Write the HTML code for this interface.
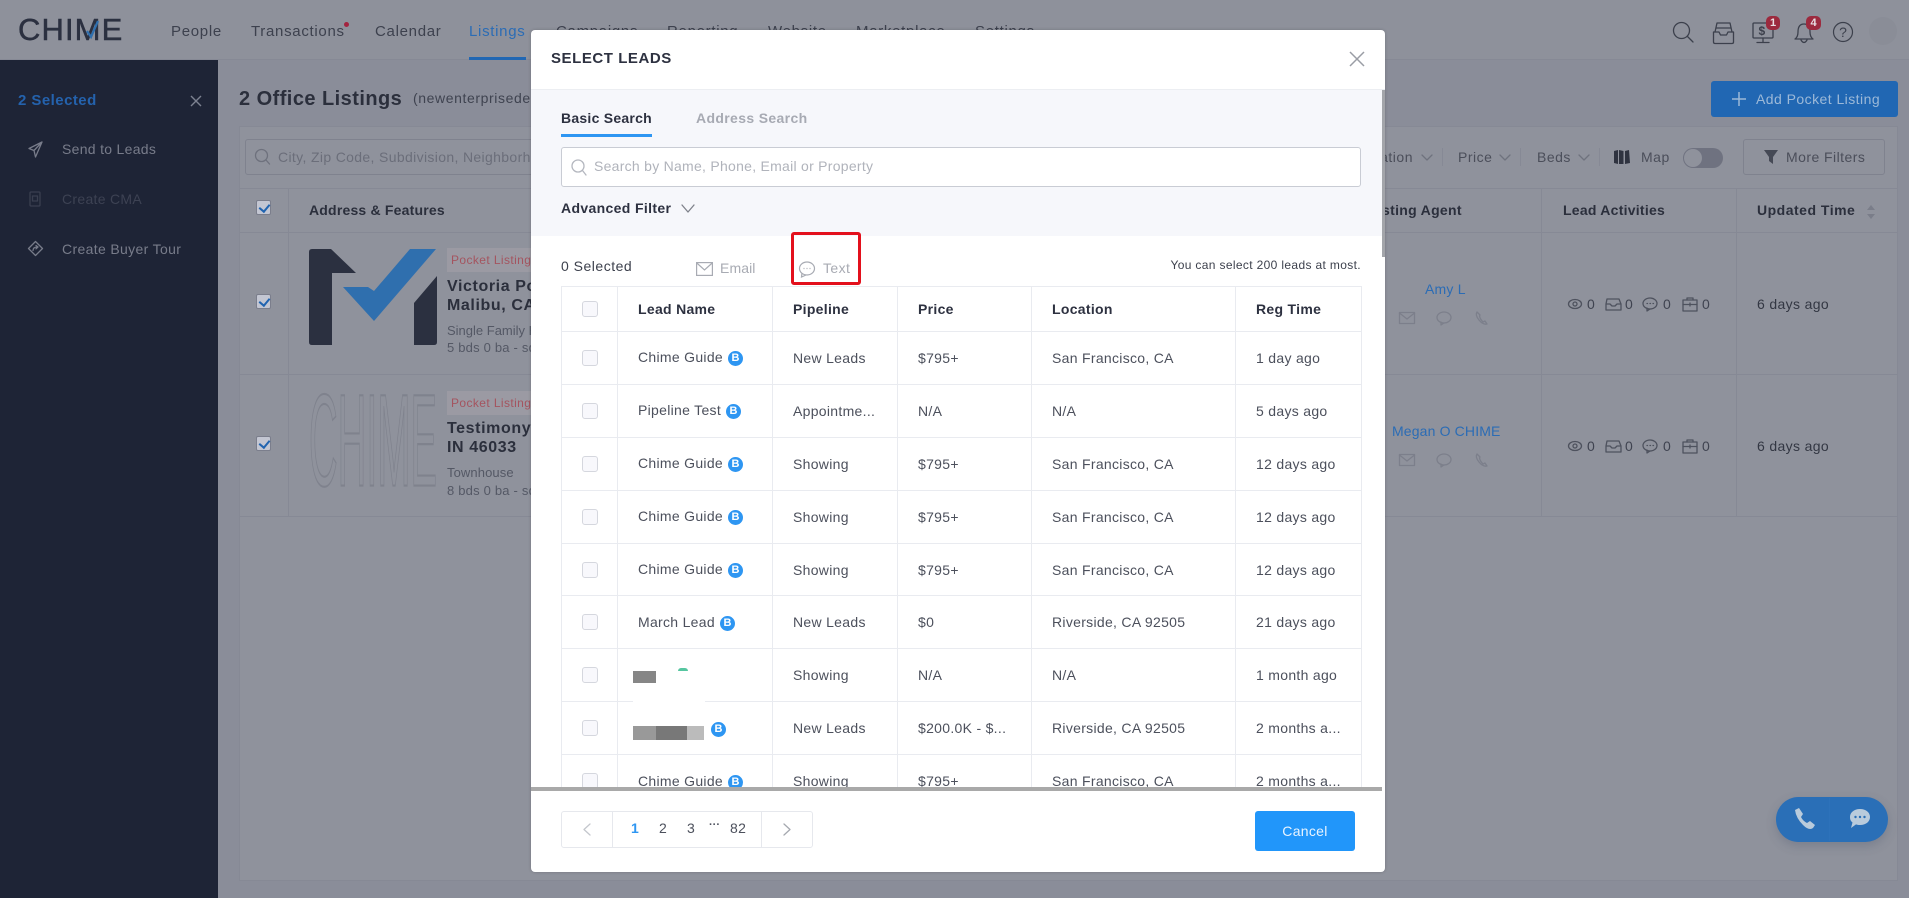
<!DOCTYPE html>
<html><head><meta charset="utf-8"><title>Select Leads</title>
<style>
*{box-sizing:border-box}
html,body{margin:0;padding:0;width:1909px;height:898px;overflow:hidden;background:#8a8d99;font-family:"Liberation Sans",sans-serif}
.a{position:absolute;white-space:nowrap}
.t{position:absolute;white-space:nowrap;line-height:20px;margin-top:-10px;letter-spacing:.3px}
svg{position:absolute;overflow:visible}
.s{fill:none;stroke-width:1.3;stroke-linecap:round;stroke-linejoin:round}
.nav{font-size:15px;color:#3d414e;letter-spacing:.7px}
.side{font-size:14px;color:#787c8a}
.th{font-size:14px;font-weight:bold;color:#2b2f3c}
.cb{position:absolute;width:15px;height:15px;background:#c3c6d2;border:1px solid #7b7e8c;border-radius:2px}
.cb:after{content:"";position:absolute;left:4px;top:1px;width:5px;height:8px;border:solid #2164b0;border-width:0 2.2px 2.2px 0;transform:rotate(40deg)}
.div{position:absolute;background:#868995}
.tag{position:absolute;left:447px;width:84px;height:24px;background:#9b9aa3;color:#a4545f;font-size:12px;line-height:24px;padding-left:4px;letter-spacing:.4px;white-space:nowrap;overflow:hidden}
.name{font-size:16px;font-weight:bold;color:#2b2f3c;letter-spacing:.6px}
.sub{font-size:13px;color:#545865;letter-spacing:.1px}
.modal{position:absolute;left:531px;top:30px;width:854px;height:842px;background:#fff;border-radius:4px;overflow:hidden;box-shadow:0 0 3px rgba(0,0,0,.2)}
.in{position:absolute;left:-531px;top:-30px;width:1909px;height:898px}
table{border-collapse:collapse;table-layout:fixed;width:800px;font-size:14px;color:#4c505c;letter-spacing:.3px}
td,th{border:1px solid #e9ebf0;padding:0 0 0 20px;text-align:left;white-space:nowrap;overflow:hidden;height:52.9px}
th{height:45px;color:#2d3140}
.box{display:block;width:16px;height:16px;border:1px solid #d5d7de;border-radius:3px;background:#f8f8fc;margin-left:0}
.b{display:inline-block;width:15px;height:15px;border-radius:50%;background:#2e96f2;color:#fff;font-size:11px;font-weight:bold;line-height:15px;text-align:center;letter-spacing:0;margin-left:5px;vertical-align:1px}
.pg{font-size:14px;color:#4c505c}
</style></head><body>

<!-- header -->
<div class="a" style="left:0;top:0;width:1909px;height:60px;background:#8e919b;border-bottom:1px solid #868995"></div>
<div class="a" style="left:18px;top:13px;font-size:31px;line-height:34px;color:#2b3040;letter-spacing:1.1px;font-weight:normal;-webkit-text-stroke:.5px #2b3040">CHIME</div>
<svg style="left:86px;top:19px" width="14" height="20"><path d="M1 12 L5 18 L12 2" fill="none" stroke="#2f6fae" stroke-width="2.2"/></svg>
<div class="t nav" style="left:171px;top:32px">People</div>
<div class="t nav" style="left:251px;top:32px">Transactions</div>
<div class="a" style="left:344px;top:22px;width:5px;height:5px;border-radius:50%;background:#a3233f"></div>
<div class="t nav" style="left:375px;top:32px">Calendar</div>
<div class="t nav" style="left:469px;top:32px;color:#2b6cb5">Listings</div>
<div class="a" style="left:469px;top:57px;width:57px;height:3px;background:#2167b3"></div>
<div class="t nav" style="left:556px;top:32px">Campaigns</div>
<div class="t nav" style="left:667px;top:32px">Reporting</div>
<div class="t nav" style="left:768px;top:32px">Website</div>
<div class="t nav" style="left:856px;top:32px">Marketplace</div>
<div class="t nav" style="left:975px;top:32px">Settings</div>

<!-- top icons -->
<svg style="left:1672px;top:21px" width="24" height="24"><g class="s" stroke="#3c404c" stroke-width="1.2"><circle cx="9.5" cy="9.5" r="8"/><path d="M15.5 15.5 L21 21"/></g></svg>
<svg style="left:1712px;top:21px" width="24" height="24"><g class="s" stroke="#3c404c" stroke-width="1.3"><path d="M1.5 11 H7 L8.5 14 H14.500 L16 11 H21.500 V21 Q21.500 22.500 20 22.500 H3 Q1.500 22.500 1.500 21 Z"/><path d="M3 11 L5 2 H18 L20 11 M4.500 7 H18.500"/></g></svg>
<svg style="left:1752px;top:21px" width="24" height="24"><g class="s" stroke="#3c404c" stroke-width="1.2"><rect x="1" y="2" width="20" height="15" rx="1"/><path d="M11 17 V21 M5 21.500 H17"/></g><text x="6.500" y="14" font-size="12" font-weight="bold" fill="#3c404c" font-family="Liberation Sans">$</text></svg>
<div class="a" style="left:1766px;top:16px;width:14px;height:14px;border-radius:5px;background:#9c2a3e;color:#e8dfe3;font-size:11px;font-weight:bold;line-height:14px;text-align:center">1</div>
<svg style="left:1793px;top:21px" width="22" height="24"><g class="s" stroke="#3c404c" stroke-width="1.2"><path d="M2 18 Q5 16 5 11 Q5 3 11 3 Q17 3 17 11 Q17 16 20 18 Z M8 19 Q11 24 14 19"/></g></svg>
<div class="a" style="left:1806px;top:16px;width:15px;height:14px;border-radius:5px;background:#9c2a3e;color:#e8dfe3;font-size:11px;font-weight:bold;line-height:14px;text-align:center">4</div>
<svg style="left:1833px;top:22px" width="20" height="20"><circle cx="10" cy="10" r="9.500" fill="none" stroke="#3c404c" stroke-width="1.200"/><text x="10" y="15" text-anchor="middle" font-size="14" fill="#3c404c" font-family="Liberation Sans">?</text></svg>
<div class="a" style="left:1869px;top:17px;width:28px;height:28px;border-radius:50%;background:#8a8d97"></div>

<!-- sidebar -->
<div class="a" style="left:0;top:60px;width:218px;height:838px;background:#1e2436"></div>
<div class="t" style="left:18px;top:101px;font-size:15px;font-weight:bold;color:#2462ad;letter-spacing:.45px">2 Selected</div>
<svg style="left:190px;top:95px" width="12" height="12"><path d="M1 1 L11 11 M11 1 L1 11" stroke="#7d8291" stroke-width="1.400" fill="none"/></svg>
<svg style="left:28px;top:141px" width="15" height="17"><path class="s" stroke="#787c8a" d="M14 1 L1 7.500 L6 9.500 L7.500 16 Z M6 9.500 L14 1"/></svg>
<div class="t side" style="left:62px;top:149px">Send to Leads</div>
<svg style="left:29px;top:191px" width="12" height="16"><g class="s" stroke="#3a3f50"><rect x="1" y="1" width="10" height="14" rx="1"/><rect x="3.500" y="5" width="5" height="5"/></g></svg>
<div class="t side" style="left:62px;top:199px;color:#3d4253">Create CMA</div>
<svg style="left:28px;top:241px" width="15" height="15"><g class="s" stroke="#787c8a"><path d="M7.500 .5 L14.500 7.500 L7.500 14.500 L.5 7.500 Z"/><path d="M5 9.500 Q5 6 9.500 6 M8 4.500 L10 6 L8 7.800"/></g></svg>
<div class="t side" style="left:62px;top:249px;letter-spacing:.35px">Create Buyer Tour</div>

<!-- content bg -->
<div class="t" style="left:239px;top:99px;font-size:20px;font-weight:bold;color:#2b2f3c;line-height:24px;margin-top:-12px;letter-spacing:.45px">2 Office Listings</div>
<div class="t" style="left:413px;top:98px;font-size:14px;color:#3f4350;letter-spacing:.6px">(newenterprisedemo)</div>
<div class="a" style="left:1711px;top:81px;width:187px;height:36px;background:#2167b3;border-radius:3px"></div>
<svg style="left:1731px;top:91px" width="16" height="16"><path d="M8 1 V15 M1 8 H15" stroke="#9cb9d8" stroke-width="1.500"/></svg>
<div class="t" style="left:1756px;top:99px;font-size:14px;color:#9cb9d8;letter-spacing:.45px">Add Pocket Listing</div>

<!-- panel -->
<div class="a" style="left:239px;top:126px;width:1659px;height:755px;background:#8f929c;border:1px solid #868995"></div>
<div class="a" style="left:245px;top:139px;width:500px;height:36px;border:1px solid #7f828e;border-radius:3px"></div>
<svg style="left:255px;top:149px" width="16" height="16"><g class="s" stroke="#6e717d"><circle cx="6.500" cy="6.500" r="6"/><path d="M11 11 L14.500 15"/></g></svg>
<div class="t" style="left:278px;top:157px;font-size:14px;color:#6b6e7a;letter-spacing:.35px">City, Zip Code, Subdivision, Neighborhood</div>
<div class="a" style="left:1200px;top:147px;width:213px;height:20px;line-height:20px;text-align:right;font-size:14px;color:#4b4e5a;letter-spacing:.5px">Location</div>
<svg style="left:1421px;top:154px" width="12" height="7"><path d="M1 1 L6 6 L11 1" class="s" stroke="#6f727e"/></svg>
<div class="div" style="left:1442px;top:148px;width:1px;height:18px"></div>
<div class="t" style="left:1458px;top:157px;font-size:14px;color:#4b4e5a;letter-spacing:.5px">Price</div>
<svg style="left:1499px;top:154px" width="12" height="7"><path d="M1 1 L6 6 L11 1" class="s" stroke="#6f727e"/></svg>
<div class="div" style="left:1520px;top:148px;width:1px;height:18px"></div>
<div class="t" style="left:1537px;top:157px;font-size:14px;color:#4b4e5a;letter-spacing:.5px">Beds</div>
<svg style="left:1578px;top:154px" width="12" height="7"><path d="M1 1 L6 6 L11 1" class="s" stroke="#6f727e"/></svg>
<div class="div" style="left:1599px;top:148px;width:1px;height:18px"></div>
<svg style="left:1614px;top:150px" width="16" height="14"><path fill="#2f3340" d="M0 1 L4 0 V14 L0 13 Z M5 0 L9.500 1 V14 L5 14 Z M11 1 L15 0 L16 13 L11 14 Z"/></svg>
<div class="t" style="left:1641px;top:157px;font-size:14px;color:#4b4e5a;letter-spacing:.5px">Map</div>
<div class="a" style="left:1683px;top:148px;width:40px;height:20px;border-radius:10px;background:#6f7280"></div>
<div class="a" style="left:1684px;top:149px;width:18px;height:18px;border-radius:50%;background:#8f929c"></div>
<div class="a" style="left:1743px;top:139px;width:142px;height:36px;border:1px solid #7f828e;border-radius:3px"></div>
<svg style="left:1764px;top:149px" width="14" height="16"><path fill="#454955" d="M0 1 H14 L9 8 V15 L5 12 V8 Z"/></svg>
<div class="t" style="left:1786px;top:157px;font-size:14px;color:#4b4e5a;letter-spacing:.45px">More Filters</div>

<div class="div" style="left:240px;top:188px;width:1657px;height:1px"></div>
<div class="div" style="left:240px;top:232px;width:1657px;height:1px"></div>
<div class="div" style="left:240px;top:374px;width:1657px;height:1px"></div>
<div class="div" style="left:240px;top:516px;width:1657px;height:1px"></div>
<div class="div" style="left:288px;top:188px;width:1px;height:328px"></div>
<div class="div" style="left:1541px;top:188px;width:1px;height:328px"></div>
<div class="div" style="left:1736px;top:188px;width:1px;height:328px"></div>
<div class="cb" style="left:256px;top:200px"></div>
<div class="cb" style="left:256px;top:294px"></div>
<div class="cb" style="left:256px;top:436px"></div>
<div class="t th" style="left:309px;top:210px;letter-spacing:.2px">Address &amp; Features</div>
<div class="t th" style="left:1369px;top:210px">Listing Agent</div>
<div class="t th" style="left:1563px;top:210px;letter-spacing:.25px">Lead Activities</div>
<div class="t th" style="left:1757px;top:210px;letter-spacing:.5px">Updated Time</div>
<svg style="left:1866px;top:204px" width="10" height="16"><path fill="#7a7d89" d="M5 1 L9 6 H1 Z M5 15 L9 10 H1 Z"/></svg>

<!-- listing 1 -->
<svg style="left:309px;top:249px" width="128" height="96"><path fill="#2b3040" d="M3 0 H22 L47 24 H23 V96 H3 Q0 96 0 93 V3 Q0 0 3 0 Z M128 27 V93 Q128 96 125 96 H105 V54 Z"/><path fill="#2f6fae" d="M127 0 H101 L65 42 L59 38 H34 L65 72 Z"/></svg>
<div class="tag" style="top:248px">Pocket Listing</div>
<div class="t name" style="left:447px;top:287px">Victoria Point</div>
<div class="t name" style="left:447px;top:306px">Malibu, CA 90265</div>
<div class="t sub" style="left:447px;top:331px;letter-spacing:0">Single Family Home</div>
<div class="t sub" style="left:447px;top:348px;letter-spacing:.2px">5 bds 0 ba - sqft</div>

<!-- listing 2 -->
<svg style="left:309px;top:391px" width="128" height="96"><text transform="scale(1,3.05)" x="0" y="31" font-size="43" textLength="128" lengthAdjust="spacingAndGlyphs" font-family="Liberation Sans" fill="none" stroke="#7f828d" stroke-width=".7">CHIME</text></svg>
<div class="tag" style="top:391px">Pocket Listing</div>
<div class="t name" style="left:447px;top:429px">Testimony Ave</div>
<div class="t name" style="left:447px;top:448px">IN 46033</div>
<div class="t sub" style="left:447px;top:473px">Townhouse</div>
<div class="t sub" style="left:447px;top:491px;letter-spacing:.2px">8 bds 0 ba - sqft</div>

<!-- agents -->
<div class="t" style="left:1425px;top:289px;font-size:14px;color:#2b6cb5;letter-spacing:.2px">Amy L</div>
<div class="t" style="left:1392px;top:431px;font-size:14px;color:#2b6cb5;letter-spacing:.15px">Megan O CHIME</div>
<svg style="left:1399px;top:312px" width="92" height="18"><g class="s" stroke="#7c7f8b"><rect x="0.500" y=".5" width="15" height="11"/><path d="M.5 1 L8 7 L15.500 1"/><ellipse cx="45" cy="5.500" rx="7" ry="5.500"/><path d="M42 10 L42 13 L45 11"/><path d="M78 0 Q76 3 80 8 Q84 13 88 12 L86 9 L84 10 Q81 7 80.500 4 L81 3 Z"/></g></svg>
<svg style="left:1399px;top:454px" width="92" height="18"><g class="s" stroke="#7c7f8b"><rect x="0.500" y=".5" width="15" height="11"/><path d="M.5 1 L8 7 L15.500 1"/><ellipse cx="45" cy="5.500" rx="7" ry="5.500"/><path d="M42 10 L42 13 L45 11"/><path d="M78 0 Q76 3 80 8 Q84 13 88 12 L86 9 L84 10 Q81 7 80.500 4 L81 3 Z"/></g></svg>

<!-- activities -->
<svg style="left:1568px;top:297px" width="130" height="15"><g class="s" stroke="#4e525e"><ellipse cx="7" cy="7" rx="6.500" ry="4.500"/><circle cx="7" cy="7" r="2"/><path d="M39 2 H51 L53 7 V13 H38 V7 Z M38 7 H42 L44 9 H47 L49 7 H53"/><ellipse cx="82" cy="6.500" rx="7" ry="5.500"/><path d="M79 11 V14 L82 12 M79 6.500 H79.500 M82 6.500 H82.500 M85 6.500 H85.500"/><rect x="115" y="3" width="14" height="11"/><path d="M119 3 V1 H125 V3 M115 7.500 H129 M122 6 V9"/></g></svg>
<div class="t" style="left:1587px;top:304px;font-size:14px;color:#3f4350">0</div>
<div class="t" style="left:1625px;top:304px;font-size:14px;color:#3f4350">0</div>
<div class="t" style="left:1663px;top:304px;font-size:14px;color:#3f4350">0</div>
<div class="t" style="left:1702px;top:304px;font-size:14px;color:#3f4350">0</div>
<svg style="left:1568px;top:439px" width="130" height="15"><g class="s" stroke="#4e525e"><ellipse cx="7" cy="7" rx="6.500" ry="4.500"/><circle cx="7" cy="7" r="2"/><path d="M39 2 H51 L53 7 V13 H38 V7 Z M38 7 H42 L44 9 H47 L49 7 H53"/><ellipse cx="82" cy="6.500" rx="7" ry="5.500"/><path d="M79 11 V14 L82 12 M79 6.500 H79.500 M82 6.500 H82.500 M85 6.500 H85.500"/><rect x="115" y="3" width="14" height="11"/><path d="M119 3 V1 H125 V3 M115 7.500 H129 M122 6 V9"/></g></svg>
<div class="t" style="left:1587px;top:446px;font-size:14px;color:#3f4350">0</div>
<div class="t" style="left:1625px;top:446px;font-size:14px;color:#3f4350">0</div>
<div class="t" style="left:1663px;top:446px;font-size:14px;color:#3f4350">0</div>
<div class="t" style="left:1702px;top:446px;font-size:14px;color:#3f4350">0</div>
<div class="t" style="left:1757px;top:304px;font-size:14px;color:#333743;letter-spacing:.35px">6 days ago</div>
<div class="t" style="left:1757px;top:446px;font-size:14px;color:#333743;letter-spacing:.35px">6 days ago</div>

<!-- floating button -->
<div class="a" style="left:1776px;top:797px;width:112px;height:45px;border-radius:23px;background:#2a6fb7;box-shadow:0 4px 10px rgba(60,70,100,.25)"></div>
<svg style="left:1794px;top:808px" width="22" height="22"><path fill="#b9cbdc" d="M1 2 L5 0 L9 6 L7 9 Q9 13 13 15 L16 13 L21 17 L19 20 Q15 23 9 17 Q2 10 1 2 Z"/></svg>
<div class="a" style="left:1829px;top:798px;width:1px;height:43px;background:#2d72ba"></div>
<svg style="left:1849px;top:809px" width="22" height="20"><path fill="#b9cbdc" d="M11 0 C17 0 21 3.500 21 8 C21 12.500 17 16 11 16 C9.500 16 8 15.800 7 15.400 L2 19 L3.500 13.500 C1.500 12 1 10 1 8 C1 3.500 5 0 11 0 Z"/><circle cx="6.500" cy="8" r="1.200" fill="#2a6fb7"/><circle cx="11" cy="8" r="1.200" fill="#2a6fb7"/><circle cx="15.500" cy="8" r="1.200" fill="#2a6fb7"/></svg>

<!-- MODAL -->
<div class="modal"><div class="in">
  <div class="t" style="left:551px;top:59px;font-size:15px;font-weight:bold;color:#2d3140;letter-spacing:.55px">SELECT LEADS</div>
  <svg style="left:1349px;top:51px" width="16" height="16"><path d="M1 1 L15 15 M15 1 L1 15" stroke="#9a9da5" stroke-width="1.500" fill="none"/></svg>

  <div class="a" style="left:531px;top:89px;width:854px;height:147px;background:#f6f7fb;border-top:1px solid #eceef2"></div>
  <div class="t" style="left:561px;top:118px;font-size:14px;font-weight:bold;color:#2d3140;letter-spacing:.25px">Basic Search</div>
  <div class="a" style="left:561px;top:134px;width:91px;height:3px;background:#2e96f2"></div>
  <div class="t" style="left:696px;top:118px;font-size:14px;font-weight:bold;color:#a7aab3;letter-spacing:.35px">Address Search</div>
  <div class="a" style="left:561px;top:147px;width:800px;height:40px;background:#fff;border:1px solid #c9ccd4;border-radius:3px"></div>
  <svg style="left:571px;top:159px" width="16" height="17"><g class="s" stroke="#b4b7bf"><circle cx="7" cy="7" r="6"/><path d="M11.500 11.500 L15 16"/></g></svg>
  <div class="t" style="left:594px;top:166px;font-size:14px;color:#b0b3bb;letter-spacing:.27px">Search by Name, Phone, Email or Property</div>
  <div class="t" style="left:561px;top:208px;font-size:14px;font-weight:bold;color:#2d3140;letter-spacing:.35px">Advanced Filter</div>
  <svg style="left:681px;top:204px" width="14" height="9"><path d="M1 1 L7 8 L13 1" class="s" stroke="#7e818a"/></svg>

  <div class="t" style="left:561px;top:266px;font-size:14px;color:#3d414d;letter-spacing:.5px">0 Selected</div>
  <svg style="left:696px;top:262px" width="17" height="14"><rect x=".6" y=".6" width="15.800" height="12.800" fill="none" stroke="#a8abb3" stroke-width="1.200"/><path d="M.8 1 L8.500 8 L16.200 1" fill="none" stroke="#a8abb3" stroke-width="1.200"/></svg>
  <div class="t" style="left:720px;top:268px;font-size:14px;color:#a8abb3;letter-spacing:.1px">Email</div>
  <svg style="left:798px;top:261px" width="18" height="17"><ellipse cx="9" cy="7.500" rx="7.500" ry="6.500" fill="none" stroke="#a8abb3" stroke-width="1.200"/><path d="M4 12 L3.500 16 L8 14" fill="none" stroke="#a8abb3" stroke-width="1.200"/><path d="M5.500 7.500 H6.500 M8.500 7.500 H9.500 M11.500 7.500 H12.500" stroke="#a8abb3" stroke-width="1.300"/></svg>
  <div class="t" style="left:823px;top:268px;font-size:14px;color:#a8abb3;letter-spacing:.4px">Text</div>
  <div class="a" style="left:791px;top:232px;width:70px;height:53px;border:3px solid #e3101c;border-radius:3px"></div>
  <div class="t" style="left:1100px;top:265px;width:261px;text-align:right;font-size:12px;color:#3d414d;letter-spacing:.35px">You can select 200 leads at most.</div>

  <div class="a" style="left:561px;top:286px;width:800.500px;height:501px;overflow:hidden">
  <table>
  <colgroup><col style="width:56px"><col style="width:155px"><col style="width:125px"><col style="width:134px"><col style="width:204px"><col style="width:126px"></colgroup>
  <tr><th><span class="box"></span></th><th>Lead Name</th><th>Pipeline</th><th>Price</th><th>Location</th><th>Reg Time</th></tr>
  <tr><td><span class="box"></span></td><td>Chime Guide<span class="b">B</span></td><td>New Leads</td><td>$795+</td><td>San Francisco, CA</td><td>1 day ago</td></tr>
  <tr><td><span class="box"></span></td><td>Pipeline Test<span class="b">B</span></td><td>Appointme...</td><td>N/A</td><td>N/A</td><td>5 days ago</td></tr>
  <tr><td><span class="box"></span></td><td>Chime Guide<span class="b">B</span></td><td>Showing</td><td>$795+</td><td>San Francisco, CA</td><td>12 days ago</td></tr>
  <tr><td><span class="box"></span></td><td>Chime Guide<span class="b">B</span></td><td>Showing</td><td>$795+</td><td>San Francisco, CA</td><td>12 days ago</td></tr>
  <tr><td><span class="box"></span></td><td>Chime Guide<span class="b">B</span></td><td>Showing</td><td>$795+</td><td>San Francisco, CA</td><td>12 days ago</td></tr>
  <tr><td><span class="box"></span></td><td>March Lead<span class="b">B</span></td><td>New Leads</td><td>$0</td><td>Riverside, CA 92505</td><td>21 days ago</td></tr>
  <tr><td><span class="box"></span></td><td></td><td>Showing</td><td>N/A</td><td>N/A</td><td>1 month ago</td></tr>
  <tr><td><span class="box"></span></td><td></td><td>New Leads</td><td>$200.0K - $...</td><td>Riverside, CA 92505</td><td>2 months a...</td></tr>
  <tr><td><span class="box"></span></td><td>Chime Guide<span class="b">B</span></td><td>Showing</td><td>$795+</td><td>San Francisco, CA</td><td>2 months a...</td></tr>
  </table>
  </div>
  <!-- redacted blocks -->
  <div class="a" style="left:633px;top:680px;width:72px;height:46px;background:#fff"></div>
  <div class="a" style="left:633px;top:671px;width:23px;height:12px;background:#868686"></div>
  <div class="a" style="left:678px;top:668px;width:10px;height:3px;border-radius:5px 5px 0 0;background:#56c6a0"></div>
  <div class="a" style="left:633px;top:726px;width:23px;height:14px;background:#999"></div>
  <div class="a" style="left:656px;top:726px;width:31px;height:14px;background:#787878"></div>
  <div class="a" style="left:687px;top:726px;width:17px;height:14px;background:#bbb"></div>
  <div class="a" style="left:711px;top:722px;width:15px;height:15px;border-radius:50%;background:#2e96f2;color:#fff;font-size:11px;font-weight:bold;line-height:15px;text-align:center">B</div>

  <div class="a" style="left:531px;top:787px;width:851px;height:4px;background:#a9a9a9"></div>
  <div class="a" style="left:1382px;top:90px;width:3px;height:167px;background:#a3a5aa"></div>

  <div class="a" style="left:561px;top:811px;width:252px;height:37px;border:1px solid #e6e8ed;border-radius:3px"></div>
  <div class="a" style="left:612px;top:811px;width:1px;height:37px;background:#e6e8ed"></div>
  <div class="a" style="left:761px;top:811px;width:1px;height:37px;background:#e6e8ed"></div>
  <svg style="left:583px;top:823px" width="8" height="13"><path d="M7 1 L1 6.500 L7 12" class="s" stroke="#c4c7cd"/></svg>
  <svg style="left:783px;top:823px" width="8" height="13"><path d="M1 1 L7 6.500 L1 12" class="s" stroke="#a5a8af"/></svg>
  <div class="t pg" style="left:631px;top:828px;color:#2e96f2;font-weight:bold">1</div>
  <div class="t pg" style="left:659px;top:828px">2</div>
  <div class="t pg" style="left:687px;top:828px">3</div>
  <div class="t pg" style="left:709px;top:825px;font-size:11px;letter-spacing:0;font-weight:bold">···</div>
  <div class="t pg" style="left:730px;top:828px">82</div>
  <div class="a" style="left:1255px;top:811px;width:100px;height:40px;background:#2196fa;border-radius:3px;color:#e8f4ff;font-size:14px;line-height:40px;text-align:center;letter-spacing:.3px">Cancel</div>
</div></div>
</body></html>
